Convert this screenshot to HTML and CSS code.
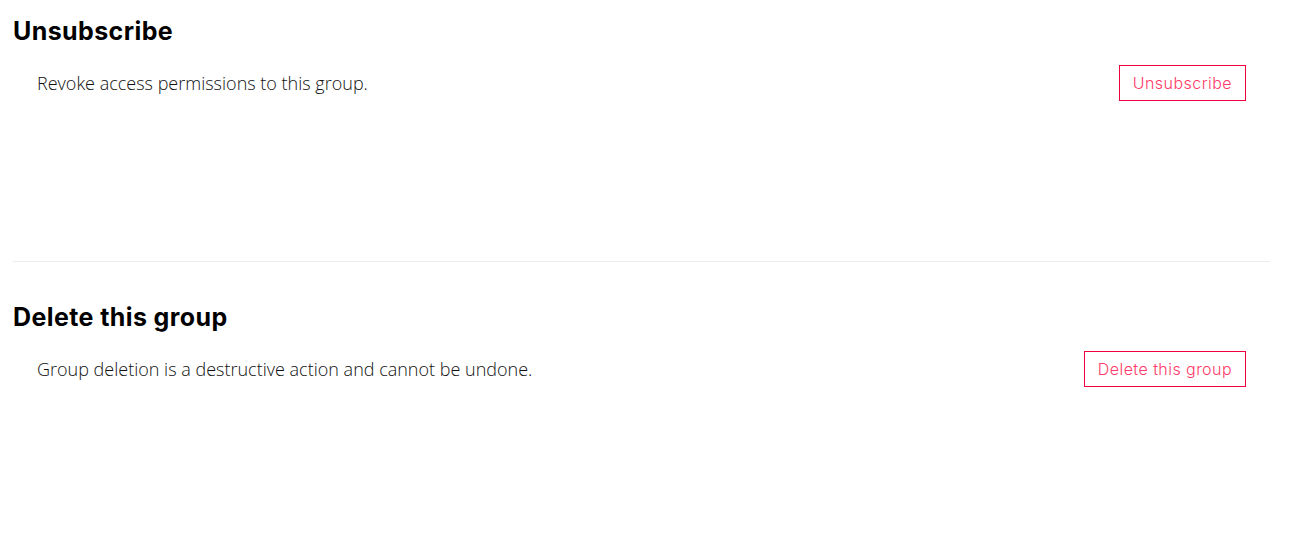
FILE: index.html
```html
<!DOCTYPE html>
<html>
<head>
<meta charset="utf-8">
<link rel="stylesheet" href="styles.css">
</head>
<body>
<main class="page">
  <section class="block block-first">
    <h2 class="title">Unsubscribe</h2>
    <div class="row">
      <p class="desc">Revoke access permissions to this group.</p>
      <button class="btn">Unsubscribe</button>
    </div>
  </section>
  <section class="block block-second">
    <h2 class="title">Delete this group</h2>
    <div class="row">
      <p class="desc">Group deletion is a destructive action and cannot be undone.</p>
      <button class="btn">Delete this group</button>
    </div>
  </section>
</main>
</body>
</html>
```
FILE: styles.css
```css
html, body {
  margin: 0;
  padding: 0;
  background: #fff;
}
.page {
  padding: 0 21px 0 13px;
}
.block {
  display: flex;
  flex-direction: column;
}
.block-first {
  height: 262px;
  border-bottom: 1px solid #ececec;
  padding-top: 17px;
  box-sizing: border-box;
}
.block-second {
  padding-top: 41px;
}
.title {
  margin: 0;
  font-family: Inter, "Open Sans", sans-serif;
  font-weight: 700;
  font-size: 25px;
  line-height: 28px;
  color: #000;
  letter-spacing: 0.4px;
}
.row {
  display: flex;
  align-items: center;
  justify-content: space-between;
  padding: 0 24px;
  margin-top: 20px;
}
.desc {
  margin: 0;
  font-family: "Open Sans", sans-serif;
  font-weight: 300;
  font-size: 18px;
  color: #111;
}
.btn {
  font-family: Inter, sans-serif;
  font-weight: 300;
  font-size: 16px;
  letter-spacing: 0.45px;
  color: #ff3a68;
  background: #fff;
  border: 1px solid #f0003c;
  border-radius: 0;
  height: 36px;
  padding: 0 13px;
  cursor: pointer;
}
```
